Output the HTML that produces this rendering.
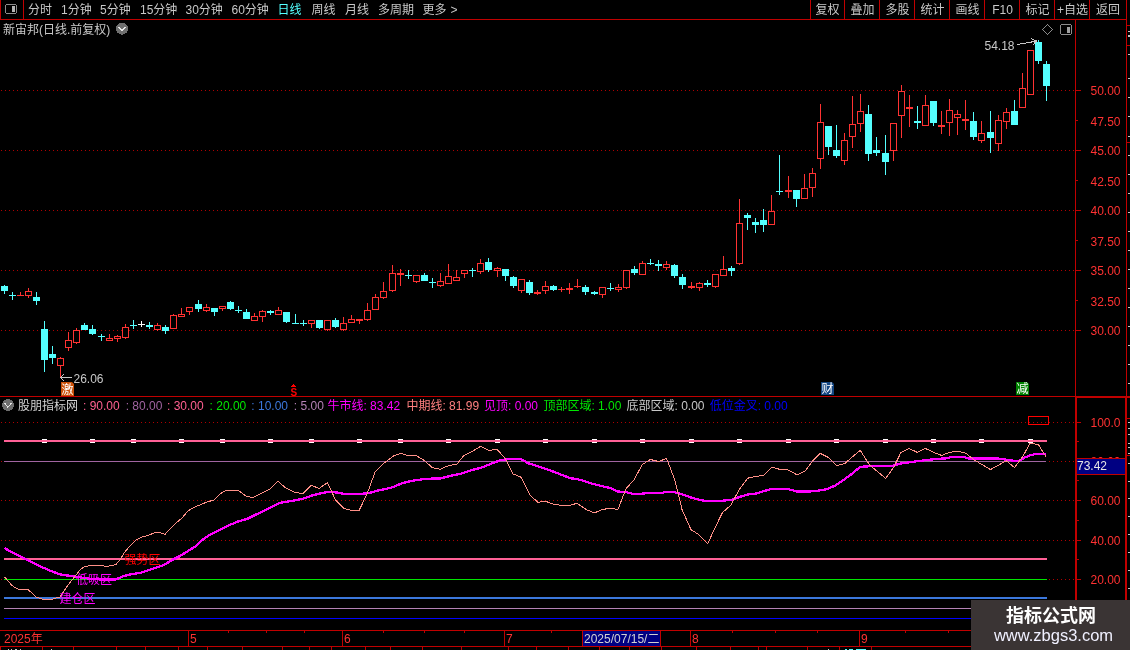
<!DOCTYPE html>
<html><head><meta charset="utf-8"><title>chart</title>
<style>
html,body{margin:0;padding:0;background:#000;}
body{width:1130px;height:650px;position:relative;overflow:hidden;font-family:"Liberation Sans","Noto Sans CJK SC",sans-serif;}
svg{position:absolute;left:0;top:0;}
.t{position:absolute;white-space:nowrap;line-height:14px;font-size:12px;}
.mk{position:absolute;width:13px;height:13px;color:#fff;font-size:12px;line-height:15px;text-align:center;overflow:hidden;clip-path:polygon(0 0,11px 0,13px 2px,13px 100%,0 100%);}
</style></head><body>
<svg width="1130" height="650" viewBox="0 0 1130 650" shape-rendering="crispEdges">
<defs><pattern id="dots" x="1" y="0" width="4" height="1" patternUnits="userSpaceOnUse"><rect x="0" y="0" width="1" height="1" fill="#b00000"/></pattern></defs>
<rect x="1" y="90" width="1074" height="1" fill="url(#dots)" />
<rect x="1" y="150" width="1074" height="1" fill="url(#dots)" />
<rect x="1" y="210" width="1074" height="1" fill="url(#dots)" />
<rect x="1" y="270" width="1074" height="1" fill="url(#dots)" />
<rect x="1" y="330" width="1074" height="1" fill="url(#dots)" />
<rect x="1" y="422" width="1074" height="1" fill="url(#dots)" />
<rect x="1" y="461" width="1074" height="1" fill="url(#dots)" />
<rect x="1" y="500" width="1074" height="1" fill="url(#dots)" />
<rect x="1" y="540" width="1074" height="1" fill="url(#dots)" />
<rect x="1" y="579" width="1074" height="1" fill="url(#dots)" />
<rect x="0" y="19" width="1126" height="1" fill="#c00000" />
<rect x="0" y="0" width="1" height="20" fill="#c00000" />
<rect x="23" y="0" width="1" height="20" fill="#c00000" />
<rect x="810" y="0" width="1" height="20" fill="#c00000" />
<rect x="844" y="0" width="1" height="20" fill="#c00000" />
<rect x="879" y="0" width="1" height="20" fill="#c00000" />
<rect x="914" y="0" width="1" height="20" fill="#c00000" />
<rect x="949" y="0" width="1" height="20" fill="#c00000" />
<rect x="984" y="0" width="1" height="20" fill="#c00000" />
<rect x="1019" y="0" width="1" height="20" fill="#c00000" />
<rect x="1054" y="0" width="1" height="20" fill="#c00000" />
<rect x="1089" y="0" width="1" height="20" fill="#c00000" />
<rect x="1126" y="0" width="1" height="650" fill="#c00000" />
<rect x="1125" y="396" width="1" height="254" fill="#c00000" />
<rect x="1075" y="20" width="1" height="610" fill="#c00000" />
<rect x="1076" y="396" width="1" height="234" fill="#c00000" />
<rect x="0" y="396" width="1126" height="1" fill="#c00000" />
<rect x="1075" y="397" width="51" height="1" fill="#c00000" />
<rect x="1126" y="25" width="4" height="1" fill="#c00000" />
<rect x="1126" y="45" width="4" height="1" fill="#c00000" />
<rect x="0" y="630" width="1126" height="1" fill="#c00000" />
<rect x="0" y="646" width="971" height="1" fill="#c00000" />
<rect x="1076" y="90" width="5" height="1" fill="#c00000" />
<rect x="1076" y="120" width="2" height="1" fill="#c00000" />
<rect x="1076" y="150" width="5" height="1" fill="#c00000" />
<rect x="1076" y="180" width="2" height="1" fill="#c00000" />
<rect x="1076" y="210" width="5" height="1" fill="#c00000" />
<rect x="1076" y="240" width="2" height="1" fill="#c00000" />
<rect x="1076" y="270" width="5" height="1" fill="#c00000" />
<rect x="1076" y="300" width="2" height="1" fill="#c00000" />
<rect x="1076" y="330" width="5" height="1" fill="#c00000" />
<rect x="1077" y="422" width="4" height="1" fill="#c00000" />
<rect x="1077" y="461" width="4" height="1" fill="#c00000" />
<rect x="1077" y="500" width="4" height="1" fill="#c00000" />
<rect x="1077" y="540" width="4" height="1" fill="#c00000" />
<rect x="1077" y="579" width="4" height="1" fill="#c00000" />
<rect x="1077" y="441" width="2" height="1" fill="#c00000" />
<rect x="1077" y="480" width="2" height="1" fill="#c00000" />
<rect x="1077" y="520" width="2" height="1" fill="#c00000" />
<rect x="1077" y="559" width="2" height="1" fill="#c00000" />
<rect x="188" y="630" width="1" height="16" fill="#c00000" />
<rect x="342" y="630" width="1" height="16" fill="#c00000" />
<rect x="504" y="630" width="1" height="16" fill="#c00000" />
<rect x="690" y="630" width="1" height="16" fill="#c00000" />
<rect x="859" y="630" width="1" height="16" fill="#c00000" />
<rect x="228" y="630" width="1" height="3" fill="#c00000" />
<rect x="266" y="630" width="1" height="3" fill="#c00000" />
<rect x="304" y="630" width="1" height="3" fill="#c00000" />
<rect x="383" y="630" width="1" height="3" fill="#c00000" />
<rect x="424" y="630" width="1" height="3" fill="#c00000" />
<rect x="464" y="630" width="1" height="3" fill="#c00000" />
<rect x="551" y="630" width="1" height="3" fill="#c00000" />
<rect x="732" y="630" width="1" height="3" fill="#c00000" />
<rect x="775" y="630" width="1" height="3" fill="#c00000" />
<rect x="817" y="630" width="1" height="3" fill="#c00000" />
<rect x="905" y="630" width="1" height="3" fill="#c00000" />
<rect x="948" y="630" width="1" height="3" fill="#c00000" />
<rect x="42" y="646" width="1" height="4" fill="#c00000" />
<rect x="73" y="646" width="1" height="4" fill="#c00000" />
<rect x="116" y="646" width="1" height="4" fill="#c00000" />
<rect x="145" y="646" width="1" height="4" fill="#c00000" />
<rect x="178" y="646" width="1" height="4" fill="#c00000" />
<rect x="207" y="646" width="1" height="4" fill="#c00000" />
<rect x="242" y="646" width="1" height="4" fill="#c00000" />
<rect x="282" y="646" width="1" height="4" fill="#c00000" />
<rect x="309" y="646" width="1" height="4" fill="#c00000" />
<rect x="331" y="646" width="1" height="4" fill="#c00000" />
<rect x="365" y="646" width="1" height="4" fill="#c00000" />
<rect x="390" y="646" width="1" height="4" fill="#c00000" />
<rect x="422" y="646" width="1" height="4" fill="#c00000" />
<rect x="461" y="646" width="1" height="4" fill="#c00000" />
<rect x="508" y="646" width="1" height="4" fill="#c00000" />
<rect x="536" y="646" width="1" height="4" fill="#c00000" />
<rect x="568" y="646" width="1" height="4" fill="#c00000" />
<rect x="599" y="646" width="1" height="4" fill="#c00000" />
<rect x="629" y="646" width="1" height="4" fill="#c00000" />
<rect x="661" y="646" width="1" height="4" fill="#c00000" />
<rect x="696" y="646" width="1" height="4" fill="#c00000" />
<rect x="730" y="646" width="1" height="4" fill="#c00000" />
<rect x="758" y="646" width="1" height="4" fill="#c00000" />
<rect x="766" y="646" width="1" height="4" fill="#c00000" />
<rect x="807" y="646" width="1" height="4" fill="#c00000" />
<rect x="839" y="646" width="1" height="4" fill="#c00000" />
<rect x="871" y="646" width="1" height="4" fill="#c00000" />
<rect x="42" y="439" width="5" height="4" fill="#ffffff" />
<rect x="90" y="439" width="5" height="4" fill="#ffffff" />
<rect x="131" y="439" width="5" height="4" fill="#ffffff" />
<rect x="179" y="439" width="5" height="4" fill="#ffffff" />
<rect x="220" y="439" width="5" height="4" fill="#ffffff" />
<rect x="268" y="439" width="5" height="4" fill="#ffffff" />
<rect x="309" y="439" width="5" height="4" fill="#ffffff" />
<rect x="357" y="439" width="5" height="4" fill="#ffffff" />
<rect x="398" y="439" width="5" height="4" fill="#ffffff" />
<rect x="446" y="439" width="5" height="4" fill="#ffffff" />
<rect x="495" y="439" width="5" height="4" fill="#ffffff" />
<rect x="543" y="439" width="5" height="4" fill="#ffffff" />
<rect x="592" y="439" width="5" height="4" fill="#ffffff" />
<rect x="640" y="439" width="5" height="4" fill="#ffffff" />
<rect x="689" y="439" width="5" height="4" fill="#ffffff" />
<rect x="737" y="439" width="5" height="4" fill="#ffffff" />
<rect x="786" y="439" width="5" height="4" fill="#ffffff" />
<rect x="834" y="439" width="5" height="4" fill="#ffffff" />
<rect x="883" y="439" width="5" height="4" fill="#ffffff" />
<rect x="931" y="439" width="5" height="4" fill="#ffffff" />
<rect x="979" y="439" width="5" height="4" fill="#ffffff" />
<rect x="1028" y="439" width="5" height="4" fill="#ffffff" />
<rect x="0" y="646" width="1" height="4" fill="#c00000" />
<rect x="8" y="649" width="1" height="1" fill="#c8c8c8" />
<rect x="11" y="649" width="1" height="1" fill="#c8c8c8" />
<rect x="15" y="649" width="1" height="1" fill="#c8c8c8" />
<rect x="16" y="649" width="1" height="1" fill="#c8c8c8" />
<rect x="20" y="649" width="1" height="1" fill="#c8c8c8" />
<rect x="51" y="649" width="1" height="1" fill="#c8c8c8" />
<rect x="828" y="649" width="1" height="1" fill="#c8c8c8" />
<rect x="845" y="649" width="2" height="1" fill="#54ffff" />
<rect x="849" y="649" width="4" height="1" fill="#54ffff" />
<rect x="856" y="649" width="10" height="1" fill="#54ffff" />
<rect x="1126" y="396" width="4" height="2" fill="#c00000" />
<rect x="1126" y="418" width="4" height="1" fill="#c00000" />
<rect x="1126" y="455" width="4" height="1" fill="#c00000" />
<rect x="1126" y="142" width="4" height="1" fill="#c00000" />
<rect x="1128" y="31" width="2" height="1" fill="#c8c8c8" />
<rect x="1128" y="35" width="2" height="1" fill="#c8c8c8" />
<rect x="1128" y="36" width="2" height="1" fill="#c8c8c8" />
<rect x="1128" y="54" width="2" height="1" fill="#c8c8c8" />
<rect x="1128" y="78" width="2" height="1" fill="#c8c8c8" />
<rect x="1128" y="97" width="2" height="1" fill="#c8c8c8" />
<rect x="1128" y="116" width="2" height="1" fill="#c8c8c8" />
<rect x="1128" y="136" width="2" height="1" fill="#c8c8c8" />
<rect x="1128" y="155" width="2" height="1" fill="#c8c8c8" />
<rect x="1128" y="174" width="2" height="1" fill="#c8c8c8" />
<rect x="1128" y="193" width="2" height="1" fill="#c8c8c8" />
<rect x="1128" y="212" width="2" height="1" fill="#c8c8c8" />
<rect x="1128" y="231" width="2" height="1" fill="#c8c8c8" />
<rect x="1128" y="250" width="2" height="1" fill="#c8c8c8" />
<rect x="1128" y="269" width="2" height="1" fill="#c8c8c8" />
<rect x="1128" y="288" width="2" height="1" fill="#c8c8c8" />
<rect x="1128" y="307" width="2" height="1" fill="#c8c8c8" />
<rect x="1128" y="326" width="2" height="1" fill="#c8c8c8" />
<rect x="1128" y="345" width="2" height="1" fill="#c8c8c8" />
<rect x="1128" y="364" width="2" height="1" fill="#c8c8c8" />
<rect x="1128" y="383" width="2" height="1" fill="#c8c8c8" />
<rect x="1128" y="422" width="2" height="1" fill="#c8c8c8" />
<rect x="1128" y="428" width="2" height="1" fill="#c8c8c8" />
<rect x="1128" y="434" width="2" height="1" fill="#c8c8c8" />
<rect x="1128" y="443" width="2" height="1" fill="#c8c8c8" />
<rect x="1128" y="447" width="2" height="1" fill="#c8c8c8" />
<rect x="1128" y="453" width="2" height="1" fill="#c8c8c8" />
<rect x="1128" y="463" width="2" height="1" fill="#c8c8c8" />
<rect x="1128" y="481" width="2" height="1" fill="#c8c8c8" />
<rect x="1128" y="498" width="2" height="1" fill="#c8c8c8" />
<rect x="1128" y="516" width="2" height="1" fill="#c8c8c8" />
<rect x="1128" y="534" width="2" height="1" fill="#c8c8c8" />
<rect x="1128" y="552" width="2" height="1" fill="#c8c8c8" />
<rect x="1128" y="570" width="2" height="1" fill="#c8c8c8" />
<rect x="1128" y="588" width="2" height="1" fill="#c8c8c8" />
<rect x="4" y="440" width="1043" height="2" fill="#ff6096" />
<rect x="4" y="461" width="1042" height="1" fill="#a064a0" />
<rect x="4" y="558" width="1043" height="2" fill="#ff6096" />
<rect x="4" y="579" width="1043" height="1" fill="#00e600" />
<rect x="4" y="597" width="1043" height="2" fill="#3c78dc" />
<rect x="4" y="608" width="1043" height="1" fill="#b482b4" />
<rect x="4" y="618" width="1043" height="1" fill="#0000ff" />
<polyline points="4.4,548 12,552.4 20,556 28,560.4 36,564.4 44,568 52,571.4 60,574.4 68,575.6 76,576.6 84,578 92,579 100,579.4 108,579.6 116,579.4 124,576 132,574 140,573 148,570.4 156,567.6 164,565 172,560 180,556 188,551 196,546 200.2,541.5 210.4,534.4 220.5,529.7 230.7,524.6 238.8,521.2 247,519 255,515 263.3,511 271.4,507 279.6,502.9 287.7,501.6 295.8,500.2 304,498.4 312,495.5 320.3,493.5 328.4,491.7 336.5,492.5 344.7,493.9 352.8,493.9 361,493.9 369,493.1 377.3,490.7 385.4,489 393.5,487 401.7,483.3 409.8,481.3 418,479.9 426.3,478.8 440.5,478.4 450.7,475.8 463,473.2 471,470.3 481.2,467.7 491.4,463.6 499.6,460.5 507.7,459.1 521,459.1 528,463.2 540.3,467 552.5,471.3 562.7,475.2 570.8,478.4 577,479 585,481.3 593.2,484 601.3,486 610.5,488 617.6,491.5 625.8,492 632,493.7 642.2,493.7 650.4,492.7 662.6,492.7 666.6,491.7 673.8,492 683,494.7 693,498.2 704.3,500.8 721.6,500.8 731.8,499.8 740,496.8 748,494.5 756.2,493.5 764.3,491 771.5,489 787.7,489 797,491.5 809,491.5 819.3,490.5 827.4,489 835.6,485.4 843.7,479.9 851.9,473.8 860.2,466.8 870.4,466.2 892.7,465.7 900.9,463.5 911,462 925.3,460.2 935.5,459 945.7,458.4 951.8,457 964,457 968,458.4 996.5,458.4 1004.7,459.4 1012.8,460.7 1019,460.7 1025,457.4 1031,455 1037.3,453.7 1045.8,454.3" fill="none" stroke="#ff00ff" stroke-width="2.3" stroke-linejoin="round"/>
<polyline points="4.4,576.6 8,581 12,585.6 16,588 20,590 24,589.4 28,589.6 32,593 36,597 40,598.4 44,599.4 52,599.4 56,598 60,597 64,591 68,585 72,580 76,575 80,570 84,567 90,565.6 100,565 106,566.4 112,565.6 116,564.4 120,560 124,553 130,546 136,540 142,537 148,535.4 154,533 160,532.6 165,534.4 170,529 176,523 182,518 188,511 192,508.4 198,505.7 206.3,502.3 214.4,499.8 220.5,493.7 224.6,491 230.7,490.2 238.8,490.7 246,496.2 253,497.6 261.2,493.5 269.4,489.4 278,481.3 285.7,488 293.8,492 303,493.7 311.5,485.2 319.2,488.6 327.4,482.5 335.5,499.8 343.7,508.4 351.8,510.6 359,510.6 367,494.1 375.2,471.7 383.4,463.6 393.5,456 400.7,453.4 407.8,455.4 416,455.4 424.2,460.5 432.4,467.7 440,469.3 448.7,465.6 456.8,464.2 464,455.4 472,451.4 480.8,446.3 489,450.4 497,449.3 505.3,458.5 512.8,473.8 521,477.2 530,495.1 537.8,502.3 545.4,501.2 553.5,504.3 561.6,505.3 569.8,505.3 577,503.3 586,509.4 594.2,513 602.3,509.4 610.5,508.4 618,509.4 625.8,489 634,479.9 642.2,464.6 650.4,459.5 658.5,461.5 666.6,458.5 674.8,479.9 682,509.4 691,529.7 698.2,534.2 707.8,543.6 715.5,526.7 722.6,512.4 730.8,505.3 739,490 747.6,478.2 756.2,476.4 763.3,475.4 771.9,467.2 779.6,469.3 787.7,469.7 797,474.8 805,471.3 812.2,461.5 820.3,453.4 828.5,457.5 836.6,465.6 844.7,463.6 852.9,456.5 860.2,450.3 869.3,464.7 877.5,471.6 885.6,478.4 893.8,467.2 900.9,452.5 909,448.4 917.2,452.3 925.3,448.4 933.5,452.3 941.6,455.4 949.7,452.3 957.9,451.3 966,453.3 974.2,460 982.3,464.7 990.4,469.6 998.6,465.1 1006.3,460.7 1014.5,467.6 1023,456 1030,443.4 1038.3,444.4 1045.8,456.6" fill="none" stroke="#ff9088" stroke-width="1"/>
<rect x="1028.5" y="416.5" width="20" height="8" fill="none" stroke="#ff0000" stroke-width="1"/>
<rect x="4" y="285" width="1" height="9" fill="#54ffff" />
<rect x="1" y="286" width="7" height="5" fill="#54ffff" />
<rect x="12" y="292" width="1" height="8" fill="#54ffff" />
<rect x="9" y="295" width="7" height="1" fill="#54ffff" />
<rect x="20" y="292" width="1" height="4" fill="#ff3232" />
<rect x="17" y="295" width="7" height="1" fill="#ff3232" />
<rect x="28" y="288" width="1" height="3" fill="#ff3232" />
<rect x="28" y="296" width="1" height="2" fill="#ff3232" />
<rect x="25.5" y="291.5" width="6" height="4" fill="#000" stroke="#ff3232" stroke-width="1"/>
<rect x="36" y="292" width="1" height="13" fill="#54ffff" />
<rect x="33" y="297" width="7" height="4" fill="#54ffff" />
<rect x="44" y="321" width="1" height="51" fill="#54ffff" />
<rect x="41" y="329" width="7" height="31" fill="#54ffff" />
<rect x="52" y="346" width="1" height="18" fill="#54ffff" />
<rect x="49" y="354" width="7" height="4" fill="#54ffff" />
<rect x="60" y="357" width="1" height="1" fill="#ff3232" />
<rect x="60" y="366" width="1" height="12" fill="#ff3232" />
<rect x="57.5" y="358.5" width="6" height="7" fill="#000" stroke="#ff3232" stroke-width="1"/>
<rect x="68" y="332" width="1" height="8" fill="#ff3232" />
<rect x="68" y="348" width="1" height="3" fill="#ff3232" />
<rect x="65.5" y="340.5" width="6" height="7" fill="#000" stroke="#ff3232" stroke-width="1"/>
<rect x="76" y="328" width="1" height="2" fill="#ff3232" />
<rect x="76" y="343" width="1" height="1" fill="#ff3232" />
<rect x="73.5" y="330.5" width="6" height="12" fill="#000" stroke="#ff3232" stroke-width="1"/>
<rect x="84" y="323" width="1" height="7" fill="#54ffff" />
<rect x="81" y="325" width="7" height="5" fill="#54ffff" />
<rect x="92" y="325" width="1" height="10" fill="#54ffff" />
<rect x="89" y="329" width="7" height="5" fill="#54ffff" />
<rect x="101" y="334" width="1" height="7" fill="#54ffff" />
<rect x="98" y="336" width="7" height="1" fill="#54ffff" />
<rect x="109" y="334" width="1" height="4" fill="#ff3232" />
<rect x="106.5" y="338.5" width="6" height="2" fill="#000" stroke="#ff3232" stroke-width="1"/>
<rect x="117" y="335" width="1" height="1" fill="#ff3232" />
<rect x="117" y="339" width="1" height="3" fill="#ff3232" />
<rect x="114.5" y="336.5" width="6" height="2" fill="#000" stroke="#ff3232" stroke-width="1"/>
<rect x="125" y="324" width="1" height="3" fill="#ff3232" />
<rect x="125" y="338" width="1" height="1" fill="#ff3232" />
<rect x="122.5" y="327.5" width="6" height="10" fill="#000" stroke="#ff3232" stroke-width="1"/>
<rect x="133" y="320" width="1" height="9" fill="#54ffff" />
<rect x="130" y="325" width="7" height="1" fill="#54ffff" />
<rect x="141" y="321" width="1" height="6" fill="#ffffff" />
<rect x="138" y="324" width="7" height="1" fill="#ffffff" />
<rect x="149" y="322" width="1" height="7" fill="#54ffff" />
<rect x="146" y="325" width="7" height="2" fill="#54ffff" />
<rect x="157" y="323" width="1" height="2" fill="#ff3232" />
<rect x="157" y="330" width="1" height="1" fill="#ff3232" />
<rect x="154.5" y="325.5" width="6" height="4" fill="#000" stroke="#ff3232" stroke-width="1"/>
<rect x="165" y="325" width="1" height="9" fill="#54ffff" />
<rect x="162" y="327" width="7" height="4" fill="#54ffff" />
<rect x="173" y="314" width="1" height="1" fill="#ff3232" />
<rect x="170.5" y="315.5" width="6" height="13" fill="#000" stroke="#ff3232" stroke-width="1"/>
<rect x="181" y="308" width="1" height="6" fill="#ff3232" />
<rect x="178.5" y="314.5" width="6" height="2" fill="#000" stroke="#ff3232" stroke-width="1"/>
<rect x="189" y="312" width="1" height="3" fill="#ff3232" />
<rect x="186.5" y="307.5" width="6" height="4" fill="#000" stroke="#ff3232" stroke-width="1"/>
<rect x="198" y="300" width="1" height="12" fill="#54ffff" />
<rect x="195" y="304" width="7" height="5" fill="#54ffff" />
<rect x="206" y="304" width="1" height="3" fill="#ff3232" />
<rect x="206" y="311" width="1" height="1" fill="#ff3232" />
<rect x="203.5" y="307.5" width="6" height="3" fill="#000" stroke="#ff3232" stroke-width="1"/>
<rect x="214" y="308" width="1" height="8" fill="#54ffff" />
<rect x="211" y="308" width="7" height="4" fill="#54ffff" />
<rect x="222" y="309" width="1" height="2" fill="#ff3232" />
<rect x="219.5" y="306.5" width="6" height="2" fill="#000" stroke="#ff3232" stroke-width="1"/>
<rect x="230" y="301" width="1" height="9" fill="#54ffff" />
<rect x="227" y="302" width="7" height="7" fill="#54ffff" />
<rect x="238" y="306" width="1" height="7" fill="#54ffff" />
<rect x="235" y="310" width="7" height="1" fill="#54ffff" />
<rect x="246" y="309" width="1" height="10" fill="#54ffff" />
<rect x="243" y="312" width="7" height="7" fill="#54ffff" />
<rect x="254" y="313" width="1" height="3" fill="#ff3232" />
<rect x="251.5" y="316.5" width="6" height="4" fill="#000" stroke="#ff3232" stroke-width="1"/>
<rect x="262" y="310" width="1" height="1" fill="#ff3232" />
<rect x="262" y="317" width="1" height="5" fill="#ff3232" />
<rect x="259.5" y="311.5" width="6" height="5" fill="#000" stroke="#ff3232" stroke-width="1"/>
<rect x="270" y="310" width="1" height="5" fill="#54ffff" />
<rect x="267" y="311" width="7" height="2" fill="#54ffff" />
<rect x="278" y="307" width="1" height="3" fill="#ff3232" />
<rect x="275.5" y="310.5" width="6" height="4" fill="#000" stroke="#ff3232" stroke-width="1"/>
<rect x="286" y="312" width="1" height="11" fill="#54ffff" />
<rect x="283" y="312" width="7" height="10" fill="#54ffff" />
<rect x="295" y="314" width="1" height="10" fill="#54ffff" />
<rect x="292" y="323" width="7" height="1" fill="#54ffff" />
<rect x="303" y="320" width="1" height="6" fill="#54ffff" />
<rect x="300" y="323" width="7" height="1" fill="#54ffff" />
<rect x="311" y="324" width="1" height="4" fill="#ff3232" />
<rect x="308.5" y="320.5" width="6" height="3" fill="#000" stroke="#ff3232" stroke-width="1"/>
<rect x="319" y="320" width="1" height="9" fill="#54ffff" />
<rect x="316" y="320" width="7" height="8" fill="#54ffff" />
<rect x="327" y="330" width="1" height="1" fill="#ff3232" />
<rect x="324.5" y="320.5" width="6" height="9" fill="#000" stroke="#ff3232" stroke-width="1"/>
<rect x="335" y="318" width="1" height="10" fill="#54ffff" />
<rect x="332" y="320" width="7" height="7" fill="#54ffff" />
<rect x="343" y="317" width="1" height="6" fill="#ff3232" />
<rect x="343" y="330" width="1" height="1" fill="#ff3232" />
<rect x="340.5" y="323.5" width="6" height="6" fill="#000" stroke="#ff3232" stroke-width="1"/>
<rect x="351" y="315" width="1" height="4" fill="#ff3232" />
<rect x="348.5" y="319.5" width="6" height="3" fill="#000" stroke="#ff3232" stroke-width="1"/>
<rect x="359" y="319" width="1" height="5" fill="#ff3232" />
<rect x="356" y="319" width="7" height="2" fill="#ff3232" />
<rect x="367" y="303" width="1" height="7" fill="#ff3232" />
<rect x="367" y="320" width="1" height="1" fill="#ff3232" />
<rect x="364.5" y="310.5" width="6" height="9" fill="#000" stroke="#ff3232" stroke-width="1"/>
<rect x="375" y="294" width="1" height="3" fill="#ff3232" />
<rect x="372.5" y="297.5" width="6" height="12" fill="#000" stroke="#ff3232" stroke-width="1"/>
<rect x="383" y="282" width="1" height="9" fill="#ff3232" />
<rect x="383" y="298" width="1" height="1" fill="#ff3232" />
<rect x="380.5" y="291.5" width="6" height="6" fill="#000" stroke="#ff3232" stroke-width="1"/>
<rect x="392" y="265" width="1" height="8" fill="#ff3232" />
<rect x="392" y="291" width="1" height="1" fill="#ff3232" />
<rect x="389.5" y="273.5" width="6" height="17" fill="#000" stroke="#ff3232" stroke-width="1"/>
<rect x="400" y="269" width="1" height="17" fill="#ff3232" />
<rect x="397" y="273" width="7" height="2" fill="#ff3232" />
<rect x="408" y="270" width="1" height="9" fill="#54ffff" />
<rect x="405" y="275" width="7" height="1" fill="#54ffff" />
<rect x="416" y="282" width="1" height="1" fill="#ff3232" />
<rect x="413.5" y="275.5" width="6" height="6" fill="#000" stroke="#ff3232" stroke-width="1"/>
<rect x="424" y="273" width="1" height="8" fill="#54ffff" />
<rect x="421" y="275" width="7" height="6" fill="#54ffff" />
<rect x="432" y="278" width="1" height="10" fill="#54ffff" />
<rect x="429" y="282" width="7" height="1" fill="#54ffff" />
<rect x="440" y="273" width="1" height="8" fill="#ff3232" />
<rect x="440" y="286" width="1" height="1" fill="#ff3232" />
<rect x="437.5" y="281.5" width="6" height="4" fill="#000" stroke="#ff3232" stroke-width="1"/>
<rect x="448" y="264" width="1" height="12" fill="#ff3232" />
<rect x="445.5" y="276.5" width="6" height="7" fill="#000" stroke="#ff3232" stroke-width="1"/>
<rect x="456" y="270" width="1" height="7" fill="#ff3232" />
<rect x="453.5" y="277.5" width="6" height="3" fill="#000" stroke="#ff3232" stroke-width="1"/>
<rect x="464" y="274" width="1" height="4" fill="#ff3232" />
<rect x="461.5" y="270.5" width="6" height="3" fill="#000" stroke="#ff3232" stroke-width="1"/>
<rect x="472" y="268" width="1" height="9" fill="#54ffff" />
<rect x="469" y="270" width="7" height="1" fill="#54ffff" />
<rect x="480" y="259" width="1" height="4" fill="#ff3232" />
<rect x="480" y="272" width="1" height="2" fill="#ff3232" />
<rect x="477.5" y="263.5" width="6" height="8" fill="#000" stroke="#ff3232" stroke-width="1"/>
<rect x="488" y="258" width="1" height="14" fill="#54ffff" />
<rect x="485" y="262" width="7" height="8" fill="#54ffff" />
<rect x="497" y="267" width="1" height="1" fill="#ff3232" />
<rect x="497" y="271" width="1" height="6" fill="#ff3232" />
<rect x="494.5" y="268.5" width="6" height="2" fill="#000" stroke="#ff3232" stroke-width="1"/>
<rect x="505" y="269" width="1" height="12" fill="#54ffff" />
<rect x="502" y="269" width="7" height="7" fill="#54ffff" />
<rect x="513" y="276" width="1" height="12" fill="#54ffff" />
<rect x="510" y="277" width="7" height="9" fill="#54ffff" />
<rect x="521" y="291" width="1" height="2" fill="#ff3232" />
<rect x="518.5" y="279.5" width="6" height="11" fill="#000" stroke="#ff3232" stroke-width="1"/>
<rect x="529" y="280" width="1" height="15" fill="#54ffff" />
<rect x="526" y="282" width="7" height="11" fill="#54ffff" />
<rect x="537" y="290" width="1" height="5" fill="#ff3232" />
<rect x="534" y="292" width="7" height="2" fill="#ff3232" />
<rect x="545" y="281" width="1" height="5" fill="#ff3232" />
<rect x="545" y="291" width="1" height="3" fill="#ff3232" />
<rect x="542.5" y="286.5" width="6" height="4" fill="#000" stroke="#ff3232" stroke-width="1"/>
<rect x="553" y="285" width="1" height="6" fill="#54ffff" />
<rect x="550" y="286" width="7" height="4" fill="#54ffff" />
<rect x="561" y="287" width="1" height="5" fill="#ff3232" />
<rect x="558" y="289" width="7" height="1" fill="#ff3232" />
<rect x="569" y="283" width="1" height="11" fill="#ff3232" />
<rect x="566" y="288" width="7" height="2" fill="#ff3232" />
<rect x="577" y="279" width="1" height="9" fill="#ff3232" />
<rect x="574" y="286" width="7" height="1" fill="#ff3232" />
<rect x="585" y="285" width="1" height="10" fill="#54ffff" />
<rect x="582" y="287" width="7" height="5" fill="#54ffff" />
<rect x="594" y="291" width="1" height="4" fill="#54ffff" />
<rect x="591" y="292" width="7" height="2" fill="#54ffff" />
<rect x="602" y="295" width="1" height="3" fill="#ff3232" />
<rect x="599.5" y="287.5" width="6" height="7" fill="#000" stroke="#ff3232" stroke-width="1"/>
<rect x="610" y="283" width="1" height="8" fill="#54ffff" />
<rect x="607" y="288" width="7" height="1" fill="#54ffff" />
<rect x="618" y="284" width="1" height="3" fill="#ff3232" />
<rect x="618" y="290" width="1" height="2" fill="#ff3232" />
<rect x="615.5" y="287.5" width="6" height="2" fill="#000" stroke="#ff3232" stroke-width="1"/>
<rect x="626" y="288" width="1" height="1" fill="#ff3232" />
<rect x="623.5" y="270.5" width="6" height="17" fill="#000" stroke="#ff3232" stroke-width="1"/>
<rect x="634" y="266" width="1" height="9" fill="#54ffff" />
<rect x="631" y="269" width="7" height="4" fill="#54ffff" />
<rect x="642" y="261" width="1" height="2" fill="#ff3232" />
<rect x="639.5" y="263.5" width="6" height="11" fill="#000" stroke="#ff3232" stroke-width="1"/>
<rect x="650" y="259" width="1" height="6" fill="#54ffff" />
<rect x="647" y="263" width="7" height="1" fill="#54ffff" />
<rect x="658" y="260" width="1" height="11" fill="#54ffff" />
<rect x="655" y="264" width="7" height="2" fill="#54ffff" />
<rect x="666" y="261" width="1" height="3" fill="#ff3232" />
<rect x="666" y="268" width="1" height="2" fill="#ff3232" />
<rect x="663.5" y="264.5" width="6" height="3" fill="#000" stroke="#ff3232" stroke-width="1"/>
<rect x="674" y="264" width="1" height="14" fill="#54ffff" />
<rect x="671" y="265" width="7" height="11" fill="#54ffff" />
<rect x="682" y="274" width="1" height="15" fill="#54ffff" />
<rect x="679" y="277" width="7" height="8" fill="#54ffff" />
<rect x="691" y="282" width="1" height="7" fill="#ff3232" />
<rect x="688" y="286" width="7" height="2" fill="#ff3232" />
<rect x="699" y="282" width="1" height="1" fill="#ff3232" />
<rect x="699" y="288" width="1" height="3" fill="#ff3232" />
<rect x="696.5" y="283.5" width="6" height="4" fill="#000" stroke="#ff3232" stroke-width="1"/>
<rect x="707" y="280" width="1" height="7" fill="#54ffff" />
<rect x="704" y="283" width="7" height="2" fill="#54ffff" />
<rect x="715" y="287" width="1" height="1" fill="#ff3232" />
<rect x="712.5" y="274.5" width="6" height="12" fill="#000" stroke="#ff3232" stroke-width="1"/>
<rect x="723" y="256" width="1" height="13" fill="#ff3232" />
<rect x="720.5" y="269.5" width="6" height="6" fill="#000" stroke="#ff3232" stroke-width="1"/>
<rect x="731" y="266" width="1" height="10" fill="#54ffff" />
<rect x="728" y="268" width="7" height="3" fill="#54ffff" />
<rect x="739" y="199" width="1" height="24" fill="#ff3232" />
<rect x="739" y="264" width="1" height="1" fill="#ff3232" />
<rect x="736.5" y="223.5" width="6" height="40" fill="#000" stroke="#ff3232" stroke-width="1"/>
<rect x="747" y="213" width="1" height="17" fill="#54ffff" />
<rect x="744" y="215" width="7" height="3" fill="#54ffff" />
<rect x="755" y="218" width="1" height="15" fill="#54ffff" />
<rect x="752" y="222" width="7" height="3" fill="#54ffff" />
<rect x="763" y="209" width="1" height="23" fill="#54ffff" />
<rect x="760" y="220" width="7" height="5" fill="#54ffff" />
<rect x="771" y="195" width="1" height="16" fill="#ff3232" />
<rect x="768.5" y="211.5" width="6" height="13" fill="#000" stroke="#ff3232" stroke-width="1"/>
<rect x="779" y="155" width="1" height="40" fill="#54ffff" />
<rect x="776" y="191" width="7" height="1" fill="#54ffff" />
<rect x="788" y="176" width="1" height="22" fill="#ff3232" />
<rect x="785" y="190" width="7" height="2" fill="#ff3232" />
<rect x="796" y="190" width="1" height="17" fill="#54ffff" />
<rect x="793" y="190" width="7" height="9" fill="#54ffff" />
<rect x="804" y="174" width="1" height="14" fill="#ff3232" />
<rect x="801.5" y="188.5" width="6" height="10" fill="#000" stroke="#ff3232" stroke-width="1"/>
<rect x="812" y="168" width="1" height="5" fill="#ff3232" />
<rect x="812" y="188" width="1" height="9" fill="#ff3232" />
<rect x="809.5" y="173.5" width="6" height="14" fill="#000" stroke="#ff3232" stroke-width="1"/>
<rect x="820" y="104" width="1" height="18" fill="#ff3232" />
<rect x="820" y="159" width="1" height="10" fill="#ff3232" />
<rect x="817.5" y="122.5" width="6" height="36" fill="#000" stroke="#ff3232" stroke-width="1"/>
<rect x="828" y="126" width="1" height="29" fill="#54ffff" />
<rect x="825" y="126" width="7" height="21" fill="#54ffff" />
<rect x="836" y="125" width="1" height="33" fill="#54ffff" />
<rect x="833" y="150" width="7" height="6" fill="#54ffff" />
<rect x="844" y="133" width="1" height="7" fill="#ff3232" />
<rect x="844" y="161" width="1" height="4" fill="#ff3232" />
<rect x="841.5" y="140.5" width="6" height="20" fill="#000" stroke="#ff3232" stroke-width="1"/>
<rect x="852" y="96" width="1" height="28" fill="#ff3232" />
<rect x="852" y="137" width="1" height="11" fill="#ff3232" />
<rect x="849.5" y="124.5" width="6" height="12" fill="#000" stroke="#ff3232" stroke-width="1"/>
<rect x="860" y="94" width="1" height="17" fill="#ff3232" />
<rect x="860" y="124" width="1" height="8" fill="#ff3232" />
<rect x="857.5" y="111.5" width="6" height="12" fill="#000" stroke="#ff3232" stroke-width="1"/>
<rect x="868" y="105" width="1" height="56" fill="#54ffff" />
<rect x="865" y="114" width="7" height="40" fill="#54ffff" />
<rect x="876" y="137" width="1" height="19" fill="#54ffff" />
<rect x="873" y="150" width="7" height="3" fill="#54ffff" />
<rect x="885" y="135" width="1" height="40" fill="#54ffff" />
<rect x="882" y="153" width="7" height="9" fill="#54ffff" />
<rect x="893" y="151" width="1" height="10" fill="#ff3232" />
<rect x="890.5" y="123.5" width="6" height="27" fill="#000" stroke="#ff3232" stroke-width="1"/>
<rect x="901" y="85" width="1" height="6" fill="#ff3232" />
<rect x="901" y="116" width="1" height="22" fill="#ff3232" />
<rect x="898.5" y="91.5" width="6" height="24" fill="#000" stroke="#ff3232" stroke-width="1"/>
<rect x="909" y="95" width="1" height="32" fill="#ff3232" />
<rect x="906" y="107" width="7" height="2" fill="#ff3232" />
<rect x="917" y="106" width="1" height="23" fill="#54ffff" />
<rect x="914" y="121" width="7" height="2" fill="#54ffff" />
<rect x="925" y="95" width="1" height="10" fill="#ff3232" />
<rect x="922.5" y="105.5" width="6" height="20" fill="#000" stroke="#ff3232" stroke-width="1"/>
<rect x="933" y="101" width="1" height="25" fill="#54ffff" />
<rect x="930" y="101" width="7" height="22" fill="#54ffff" />
<rect x="941" y="111" width="1" height="23" fill="#ff3232" />
<rect x="938" y="125" width="7" height="2" fill="#ff3232" />
<rect x="949" y="99" width="1" height="11" fill="#ff3232" />
<rect x="949" y="123" width="1" height="13" fill="#ff3232" />
<rect x="946.5" y="110.5" width="6" height="12" fill="#000" stroke="#ff3232" stroke-width="1"/>
<rect x="957" y="110" width="1" height="4" fill="#ff3232" />
<rect x="957" y="118" width="1" height="17" fill="#ff3232" />
<rect x="954.5" y="114.5" width="6" height="3" fill="#000" stroke="#ff3232" stroke-width="1"/>
<rect x="965" y="100" width="1" height="30" fill="#ff3232" />
<rect x="962" y="119" width="7" height="2" fill="#ff3232" />
<rect x="973" y="112" width="1" height="28" fill="#54ffff" />
<rect x="970" y="121" width="7" height="16" fill="#54ffff" />
<rect x="981" y="121" width="1" height="12" fill="#ff3232" />
<rect x="981" y="141" width="1" height="2" fill="#ff3232" />
<rect x="978.5" y="133.5" width="6" height="7" fill="#000" stroke="#ff3232" stroke-width="1"/>
<rect x="990" y="111" width="1" height="42" fill="#54ffff" />
<rect x="987" y="132" width="7" height="6" fill="#54ffff" />
<rect x="998" y="115" width="1" height="5" fill="#ff3232" />
<rect x="998" y="144" width="1" height="7" fill="#ff3232" />
<rect x="995.5" y="120.5" width="6" height="23" fill="#000" stroke="#ff3232" stroke-width="1"/>
<rect x="1006" y="108" width="1" height="4" fill="#ff3232" />
<rect x="1006" y="122" width="1" height="7" fill="#ff3232" />
<rect x="1003.5" y="112.5" width="6" height="9" fill="#000" stroke="#ff3232" stroke-width="1"/>
<rect x="1014" y="100" width="1" height="25" fill="#54ffff" />
<rect x="1011" y="111" width="7" height="14" fill="#54ffff" />
<rect x="1022" y="73" width="1" height="15" fill="#ff3232" />
<rect x="1019.5" y="88.5" width="6" height="19" fill="#000" stroke="#ff3232" stroke-width="1"/>
<rect x="1027.5" y="50.5" width="6" height="44" fill="#000" stroke="#ff3232" stroke-width="1"/>
<rect x="1038" y="40" width="1" height="24" fill="#54ffff" />
<rect x="1035" y="42" width="7" height="19" fill="#54ffff" />
<rect x="1046" y="61" width="1" height="40" fill="#54ffff" />
<rect x="1043" y="64" width="7" height="22" fill="#54ffff" />
<path d="M1017.5 44.5 L1036 41.2 M1031 38.5 L1036.5 41 L1032.5 45.5" fill="none" stroke="#c8c8c8" stroke-width="1"/>
<path d="M60 377.5 L72 377.5 M64 374 L60.5 377.5 L64 381" fill="none" stroke="#c8c8c8" stroke-width="1"/>
<rect x="5.5" y="4.5" width="11" height="9" rx="2" fill="none" stroke="#8c8c8c" stroke-width="1"/><rect x="12" y="6" width="3" height="6" fill="#b4b4b4"/>
<rect x="1060.5" y="24.5" width="11" height="10" rx="2" fill="none" stroke="#8c8c8c" stroke-width="1"/><rect x="1067" y="26.5" width="3" height="6" fill="#a0a0a0"/>
<path d="M1047.5 24.5 L1052.5 29.5 L1047.5 34.5 L1042.5 29.5 Z" fill="none" stroke="#8c8c8c" stroke-width="1"/>
<circle cx="122" cy="28.7" r="6" fill="#6e6e6e"/><path d="M118.5 27 L122 30.8 L125.5 27" fill="none" stroke="#e6e6e6" stroke-width="1.3"/>
<circle cx="8" cy="405" r="6" fill="#6e6e6e"/><path d="M4.5 403.3 L8 407.1 L11.500 403.3" fill="none" stroke="#e6e6e6" stroke-width="1.3"/>
<path d="M293 384h1v1h1v1h1v1h-5v-1h1v-1h1z" fill="#ff0000"/>
</svg>
<div id="txt" style="position:absolute;left:0;top:0;width:1130px;height:650px;will-change:transform">
<div class="t " style="left:28px;top:3px;color:#c8c8c8;font-size:12px;">分时</div>
<div class="t " style="left:61px;top:3px;color:#c8c8c8;font-size:12px;">1分钟</div>
<div class="t " style="left:100px;top:3px;color:#c8c8c8;font-size:12px;">5分钟</div>
<div class="t " style="left:140px;top:3px;color:#c8c8c8;font-size:12px;">15分钟</div>
<div class="t " style="left:185.5px;top:3px;color:#c8c8c8;font-size:12px;">30分钟</div>
<div class="t " style="left:231.5px;top:3px;color:#c8c8c8;font-size:12px;">60分钟</div>
<div class="t " style="left:277.5px;top:3px;color:#54ffff;font-size:12px;">日线</div>
<div class="t " style="left:311.5px;top:3px;color:#c8c8c8;font-size:12px;">周线</div>
<div class="t " style="left:345px;top:3px;color:#c8c8c8;font-size:12px;">月线</div>
<div class="t " style="left:378px;top:3px;color:#c8c8c8;font-size:12px;">多周期</div>
<div class="t " style="left:422.5px;top:3px;color:#c8c8c8;font-size:12px;">更多</div>
<div class="t " style="left:450.5px;top:3px;color:#c8c8c8;font-size:12px;">&gt;</div>
<div class="t" style="left:810px;top:3px;width:35px;text-align:center;color:#c8c8c8;font-size:12px">复权</div>
<div class="t" style="left:845px;top:3px;width:35px;text-align:center;color:#c8c8c8;font-size:12px">叠加</div>
<div class="t" style="left:880px;top:3px;width:35px;text-align:center;color:#c8c8c8;font-size:12px">多股</div>
<div class="t" style="left:915px;top:3px;width:35px;text-align:center;color:#c8c8c8;font-size:12px">统计</div>
<div class="t" style="left:950px;top:3px;width:35px;text-align:center;color:#c8c8c8;font-size:12px">画线</div>
<div class="t" style="left:985px;top:3px;width:35px;text-align:center;color:#c8c8c8;font-size:12px">F10</div>
<div class="t" style="left:1020px;top:3px;width:35px;text-align:center;color:#c8c8c8;font-size:12px">标记</div>
<div class="t" style="left:1055px;top:3px;width:35px;text-align:center;color:#c8c8c8;font-size:12px">+自选</div>
<div class="t" style="left:1090px;top:3px;width:36px;text-align:center;color:#c8c8c8;font-size:12px">返回</div>
<div class="t " style="left:3px;top:23px;color:#c8c8c8;font-size:12px;">新宙邦(日线.前复权)</div>
<div class="t " style="left:984.5px;top:38.5px;color:#c8c8c8;font-size:12px;">54.18</div>
<div class="t " style="left:73.5px;top:372px;color:#c8c8c8;font-size:12px;">26.06</div>
<div class="mk" style="left:61px;top:382px;height:14px;line-height:17px;background:#c85008">激</div>
<div class="mk" style="left:821px;top:382px;background:#144682">财</div>
<div class="mk" style="left:1016px;top:382px;background:#008200">减</div>
<div class="t " style="left:290.6px;top:386px;color:#ff0000;font-size:10px;font-weight:bold">S</div>
<div class="t " style="left:1090.5px;top:84px;color:#ff3232;font-size:12px;">50.00</div>
<div class="t " style="left:1090.5px;top:115px;color:#ff3232;font-size:12px;">47.50</div>
<div class="t " style="left:1090.5px;top:144px;color:#ff3232;font-size:12px;">45.00</div>
<div class="t " style="left:1090.5px;top:175px;color:#ff3232;font-size:12px;">42.50</div>
<div class="t " style="left:1090.5px;top:204px;color:#ff3232;font-size:12px;">40.00</div>
<div class="t " style="left:1090.5px;top:235px;color:#ff3232;font-size:12px;">37.50</div>
<div class="t " style="left:1090.5px;top:264px;color:#ff3232;font-size:12px;">35.00</div>
<div class="t " style="left:1090.5px;top:295px;color:#ff3232;font-size:12px;">32.50</div>
<div class="t " style="left:1090.5px;top:324px;color:#ff3232;font-size:12px;">30.00</div>
<div class="t " style="left:1090.5px;top:416px;color:#ff3232;font-size:12px;">100.0</div>
<div class="t " style="left:1090.5px;top:494px;color:#ff3232;font-size:12px;">60.00</div>
<div class="t " style="left:1090.5px;top:534px;color:#ff3232;font-size:12px;">40.00</div>
<div class="t " style="left:1090.5px;top:573px;color:#ff3232;font-size:12px;">20.00</div>
<div class="t " style="left:1090.5px;top:455px;color:#ff3232;font-size:12px;">80.00</div>
<div class="t" style="left:1077px;top:458px;width:48px;height:15px;background:#000082;border-top:1px solid #c00000;border-bottom:1px solid #c00000;color:#e6e6e6;font-size:12px;line-height:15px;box-sizing:content-box">73.42</div>
<div class="t " style="left:18px;top:399px;color:#d2d2d2;font-size:12px;">股朋指标网</div>
<div class="t " style="left:83px;top:399px;color:#ff6090;font-size:12px;">: 90.00</div>
<div class="t " style="left:125.7px;top:399px;color:#a064a0;font-size:12px;">: 80.00</div>
<div class="t " style="left:167px;top:399px;color:#ff6090;font-size:12px;">: 30.00</div>
<div class="t " style="left:209.6px;top:399px;color:#00e600;font-size:12px;">: 20.00</div>
<div class="t " style="left:251.3px;top:399px;color:#3c78dc;font-size:12px;">: 10.00</div>
<div class="t " style="left:293.8px;top:399px;color:#b482b4;font-size:12px;">: 5.00</div>
<div class="t " style="left:327.4px;top:399px;color:#ff00ff;font-size:12px;">牛市线: 83.42</div>
<div class="t " style="left:406.4px;top:399px;color:#ff8080;font-size:12px;">中期线: 81.99</div>
<div class="t " style="left:484px;top:399px;color:#ff00ff;font-size:12px;">见顶: 0.00</div>
<div class="t " style="left:543.4px;top:399px;color:#00e600;font-size:12px;">顶部区域: 1.00</div>
<div class="t " style="left:626.5px;top:399px;color:#c8c8c8;font-size:12px;">底部区域: 0.00</div>
<div class="t " style="left:709.7px;top:399px;color:#0000ff;font-size:12px;">低位金叉: 0.00</div>
<div class="t " style="left:124.5px;top:552.7px;color:#ff0000;font-size:12px;">强势区</div>
<div class="t " style="left:76px;top:572.5px;color:#ff00ff;font-size:12px;">低吸区</div>
<div class="t " style="left:59.5px;top:591.5px;color:#ff00ff;font-size:12px;">建仓区</div>
<div class="t " style="left:4px;top:632px;color:#ff3232;font-size:12px;">2025年</div>
<div class="t " style="left:190px;top:632px;color:#ff3232;font-size:12px;">5</div>
<div class="t " style="left:344px;top:632px;color:#ff3232;font-size:12px;">6</div>
<div class="t " style="left:506px;top:632px;color:#ff3232;font-size:12px;">7</div>
<div class="t " style="left:692px;top:632px;color:#ff3232;font-size:12px;">8</div>
<div class="t " style="left:861px;top:632px;color:#ff3232;font-size:12px;">9</div>
<div class="t" style="left:582px;top:631px;width:77px;height:15px;background:#000082;border-left:1px solid #c00000;border-right:1px solid #c00000;color:#d2d2d2;font-size:12px;line-height:16px;padding-left:1px;box-sizing:content-box;width:76px">2025/07/15/二</div>
<div style="position:absolute;left:971px;top:600px;width:159px;height:50px;background:#3a3434"></div>
<div class="t" style="left:971px;top:603.5px;width:160px;text-align:center;color:#fff;font-size:18px;font-weight:bold;line-height:24px">指标公式网</div>
<div class="t" style="left:972px;top:625px;width:163px;text-align:center;color:#f0f0ff;font-size:16.5px;line-height:20px">www.zbgs3.com</div>
</div>
</body></html>
